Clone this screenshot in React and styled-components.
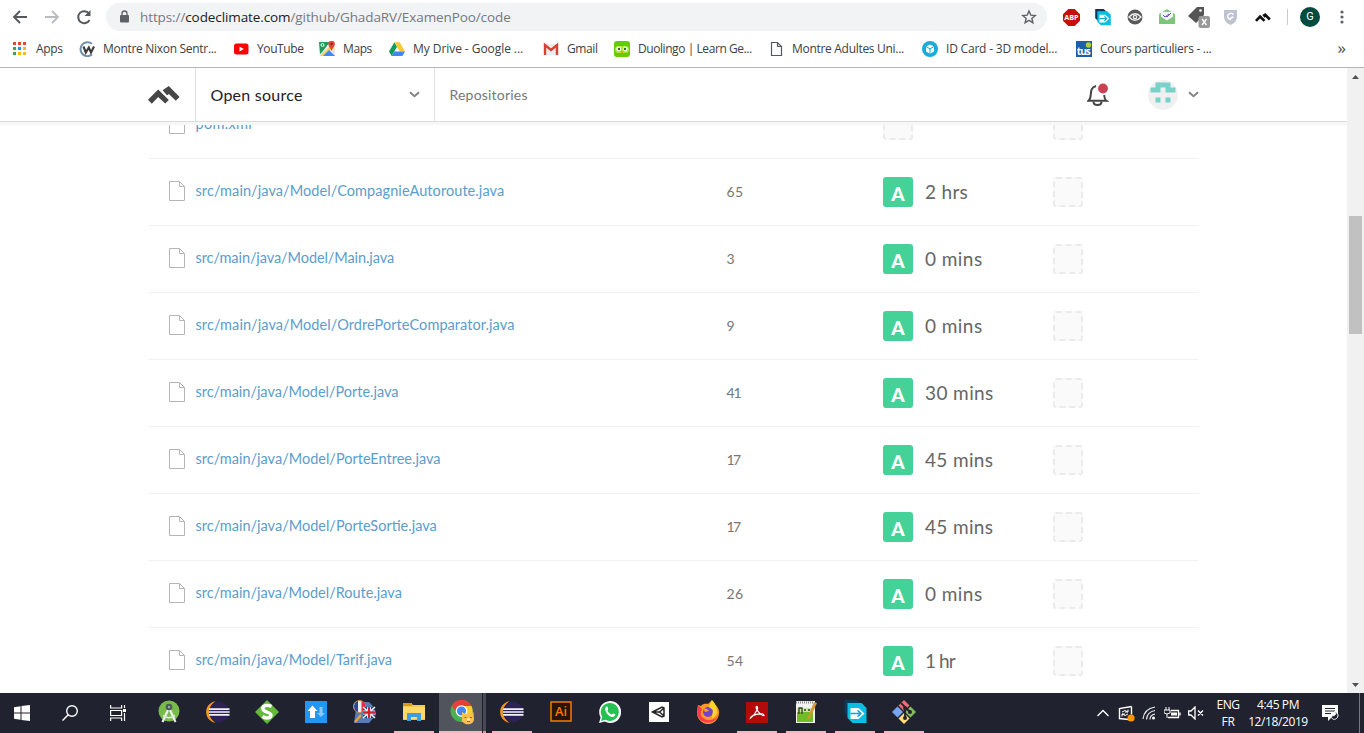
import React from "react";
import styled, { createGlobalStyle } from "styled-components";

const GlobalStyle = createGlobalStyle`
  * { box-sizing: border-box; }
  body { margin: 0; background: #fff; overflow: hidden; }
  svg { display: block; flex: none; }
`;

const ui = `"Open Sans", "Noto Sans", sans-serif`;
const brand = `Lato, "Open Sans", sans-serif`;

const Screen = styled.div`
  width: 1364px; height: 733px; display: flex; flex-direction: column; overflow: hidden;
`;

/* ---------- browser chrome ---------- */
const Chrome = styled.header`
  height: 68px; flex: none; border-bottom: 1px solid #b3b5b7; font-family: ${ui};
`;
const Toolbar = styled.div`
  height: 34px; display: flex; align-items: center; padding-left: 12px;
`;
const NavButtons = styled.div`
  width: 94px; display: flex; gap: 16px;
`;
const AddressBar = styled.div`
  width: 941px; height: 28px; border-radius: 14px; background: #f1f3f4;
  display: flex; align-items: center; padding: 0 9px 0 12px;
`;
const Url = styled.div`
  flex: 1; margin-left: 10px; font-size: 13.5px; line-height: 20px; color: #75797e; white-space: nowrap;
  letter-spacing: -0.1px;
  b { font-weight: 400; color: #202124; }
`;
const Extensions = styled.div`
  display: flex; align-items: center; gap: 8px; margin-left: 12px;
`;
const ExtensionCell = styled.div`
  width: 24px; height: 24px; display: flex; align-items: center; justify-content: center;
`;
const ToolDivider = styled.i`
  width: 1px; height: 16px; background: #c8cacd; margin-left: 12px;
`;
const Profile = styled.div`
  width: 20px; height: 20px; border-radius: 50%; background: #004d40; color: #fff;
  font: 11px/20px Roboto, sans-serif; text-align: center; margin: 0 20px 0 12px;
`;
const Bookmarks = styled.nav`
  height: 33px; display: flex; align-items: center; padding: 0 18px 4px 12px;
`;
const Bookmark = styled.div`
  width: ${p => p.$w}px; flex: none; display: flex; align-items: center; gap: 8px;
`;
const BookmarkText = styled.span`
  font-size: 12px; line-height: 18px; color: #3c4043; white-space: nowrap; letter-spacing: ${p => p.$ls || 0}px;
`;
const More = styled.span`
  margin-left: auto; font-size: 17px; line-height: 16px; padding-bottom: 2px; color: #4a4e52;
`;

/* ---------- page ---------- */
const Body = styled.div`
  height: 625px; display: flex; flex: none;
`;
const Page = styled.main`
  width: 1347px; height: 625px; overflow: hidden; font-family: ${brand};
`;
const SiteHeader = styled.div`
  height: 54px; display: flex; align-items: center; border-bottom: 1px solid #dcdcdc; padding-left: 148px;
`;
const HeaderShade = styled.div`
  height: 3px; background: #f7f7f7;
`;
const LogoCell = styled.div`
  width: 47px;
`;
const Switcher = styled.div`
  width: 240px; height: 53px; border: solid #e0e0e0; border-width: 0 1px; padding: 0 14px 0 14.5px;
  display: flex; align-items: center; justify-content: space-between;
  font-size: 16px; color: #222; letter-spacing: 0.25px;
`;
const Repositories = styled.span`
  width: 652px; padding-left: 14.5px; font-size: 14px; color: #777; letter-spacing: 0.2px; line-height: 20px;
`;
const Account = styled.div`
  display: flex; align-items: center; gap: 10px; margin-left: 39px;
`;
const FileList = styled.div`
  height: 568px; overflow: hidden; padding-left: 148px;
`;
const Scrolled = styled.div`
  margin-top: -33px;
`;
const Row = styled.div`
  width: 1050px; height: 67px; display: grid; grid-template-columns: 47.5px 531px 156.5px 170px 1fr;
  align-items: center; border-bottom: 1px solid #f1f1f1;
`;
const FileCell = styled.div`
  padding: 0 0 3px 20.5px;
`;
const Name = styled.a`
  font-size: 14.5px; line-height: 20px; color: #5b9dcb; padding-bottom: 3px; letter-spacing: ${p => p.$ls}px; white-space: nowrap;
`;
const Lines = styled.span`
  font-size: 14px; line-height: 20px; color: #777; letter-spacing: ${p => p.$ls}px;
`;
const Grade = styled.div`
  display: flex; align-items: center; gap: 12px; height: 30px;
`;
const Badge = styled.b`
  width: 30px; height: 30px; border-radius: 3px; background: #45d298; color: #fff;
  font-size: 19px; line-height: 34px; font-weight: 900; text-align: center;
`;
const Effort = styled.span`
  font-size: 19px; line-height: 30px; color: #666; letter-spacing: ${p => p.$ls}px; white-space: nowrap;
`;
const Blank = styled.i`
  display: block; width: 30px; height: 30px; border: 2px dashed #ebebeb; border-radius: 3px; background: #fafafa;
`;
const Scrollbar = styled.div`
  width: 17px; background: #f1f1f1; display: flex; flex-direction: column; align-items: center;
  padding: 7px 0 6px;
`;
const Thumb = styled.div`
  width: 13px; height: 118px; background: #c1c1c1; margin-top: 137px; margin-bottom: auto;
`;

/* ---------- taskbar ---------- */
const Taskbar = styled.footer`
  height: 40px; flex: none; background: #202230; display: flex; font-family: ${ui}; color: #fff;
`;
const SystemSlot = styled.div`
  width: 48px; display: flex; align-items: center; justify-content: center;
`;
const SystemSlots = styled.div`
  width: 144px; display: flex; margin-left: -2px; margin-right: 2px;
`;
const Slot = styled.div`
  width: 49px; height: 40px; padding: 0 4px 0 5px; display: flex;
`;
const SlotFace = styled.div`
  width: 40px; height: 40px; display: flex; align-items: center; justify-content: center;
  border-bottom: 2px solid ${p => (p.$open ? "#fdb2bf" : "transparent")};
`;
const ActiveSlot = styled(Slot)`
  padding: 0 1px;
  ${SlotFace} { width: 44px; background: #51535d; padding-left: 4px; }
`;
const ActiveEdge = styled.i`
  width: 3px; margin-left: 1px; background: #474954; border-bottom: 2px solid #d997a6;
`;
const Tray = styled.div`
  margin-left: auto; display: flex; align-items: center; width: 268px;
`;
const TrayIcons = styled.div`
  width: 119px; display: flex; align-items: center; gap: 7px;
`;
const TrayText = styled.div`
  width: ${p => p.$w}px; font-size: 12px; line-height: 17px; text-align: center;
  letter-spacing: ${p => p.$ls}px; white-space: nowrap;
`;
const Notice = styled.div`
  margin-left: 7px; flex: 1;
`;
const DesktopEdge = styled.i`
  width: 1px; height: 40px; background: #777985; margin-right: 4px;
`;

/* ---------- icons ---------- */
const Svg = ({ s = 16, w, h, vb, children, ...rest }) => (
  <svg width={w || s} height={h || s} viewBox={vb || `0 0 ${w || s} ${h || s}`} fill="none" {...rest}>{children}</svg>
);
const Chevron = () => <Svg w={11} h={7}><path d="M1 1.200l4.500 4 4.500-4" stroke="#858585" strokeWidth="2" /></Svg>;
const Codeclimate = ({ w, h, c }) => (
  <Svg w={w} h={h} vb="0 0 32 18">
    <path fill={c} d="M0 13.800L10.200 3.400L20.800 14L17.200 17.600L10.200 10.900L3.800 17.700ZM14.600 4.200L20.800 0L31.600 11L27.800 14.800L20.900 8L19 9.300Z" />
  </Svg>
);
const Wave = ({ large }) => (
  <Svg w={large ? 23 : 16} h={large ? 24 : 17} vb="0 0 22 24">
    <path d="M0 0h12l4 4H5v13H4l-4-4z" fill="#0a3a58" />
    <path d="M3 3h14l5 5v15H8l-5-5z" fill="#08bfe3" />
    <path d="M6 8h8l6 5.500-6 5.500H6z" fill="#fff" />
    <path d="M6 13.500h10M13 10.300l3.300 3.200-3.300 3.200" stroke="#08a9cf" strokeWidth="1.600" />
  </Svg>
);
const Eclipse = () => (
  <Svg w={24} h={22}>
    <path d="M9.500 0C-3 3-3 19 9.500 22C2 17 2 5 9.500 0z" fill="#f7941e" />
    <circle cx="13" cy="11" r="10.300" fill="#2c2255" />
    <path d="M3 8.200h20.500M2.700 11h21M3 13.800h20.500" stroke="#f4f3fa" strokeWidth="1.700" />
  </Svg>
);

const appsColors = ["#ea4335", "#ea4335", "#ea4335", "#34a853", "#1a8ff0", "#fbbc04", "#34a853", "#fbbc04", "#fbbc04"];
const bookmarkIcons = {
  apps: <Svg>{appsColors.map((c, i) => <rect key={i} x={1 + (i % 3) * 5} y={1 + Math.floor(i / 3) * 5} width="3" height="3" fill={c} />)}</Svg>,
  nixon: <Svg><path d="M13 2.800A7 7 0 1013 13.500" stroke="#6e8fab" strokeWidth="2" /><path d="M4.500 5.500l2.300 6 3-5 2.200 5 3-6" stroke="#3b3b3b" strokeWidth="2.100" /></Svg>,
  youtube: <Svg><rect x="1" y="2.500" width="14.500" height="11" rx="2.500" fill="#f00" /><path d="M6.500 5.500v5l4.300-2.500z" fill="#fff" /></Svg>,
  maps: <Svg><path d="M0 1h11L1 14z" fill="#1f9d57" /><path d="M0 14L12 3l4 5v7H2z" fill="#e4e6e8" /><path d="M1 15L13 4l3 3-7 3-5 5z" fill="#fcd03b" /><path d="M4 15l6-6 6 6z" fill="#4285f4" /><path d="M12.500 10C11 6 9.300 5.500 9.300 3a3.300 3.300 0 016.600 0c0 2.500-2 3-3.400 7z" fill="#df4938" /><circle cx="12.600" cy="3" r="1.200" fill="#872a24" /><circle cx="3.500" cy="4" r="1.500" stroke="#fff" /></Svg>,
  drive: <Svg><path d="M5.400 1.300L0 10.500l2.700 4.400L8 5.700z" fill="#0f9d58" /><path d="M5.400 1.300h5.300l5.300 9.200h-5.300z" fill="#fbc934" /><path d="M5.300 10.500H16l-2.700 4.400H2.700z" fill="#4285f4" /></Svg>,
  gmail: <Svg><path d="M1 3h14v11H1z" fill="#ededed" /><path d="M2 14V4l6 5 6-5v10" stroke="#d93f32" strokeWidth="2.400" /></Svg>,
  duo: <Svg><rect width="16" height="16" rx="3" fill="#65cc02" /><rect x="1" y="5" width="14" height="7" rx="3.500" fill="#a5e936" /><circle cx="4.700" cy="8" r="2.400" fill="#fff" /><circle cx="11.300" cy="8" r="2.400" fill="#fff" /><circle cx="5" cy="8" r="1.200" fill="#363" /><circle cx="11" cy="8" r="1.200" fill="#363" /><path d="M6 10h4l-2 2.500z" fill="#ff9800" /></Svg>,
  doc: <Svg><path d="M3.500 1.500h6l4 4v9h-10zM9.500 1.500v4h4" stroke="#55585c" strokeWidth="1.200" /></Svg>,
  cube: <Svg><circle cx="8" cy="8" r="8" fill="#1caad9" /><path d="M8 3.400l4 2.200v4.900l-4 2.300-4-2.300V5.600z" fill="#fff" /><path d="M4 5.600l4 2.200 4-2.200M8 7.800v5" stroke="#1caad9" /></Svg>,
  tus: <Svg><path d="M0 0h16v16H0z" fill="#1c5ea8" /><text x="0.800" y="13.500" fontFamily="Open Sans" fontSize="10" fontWeight="700" fill="#fff" textLength="14">tus</text><circle cx="12.500" cy="4" r="2.700" fill="#b6cc39" /></Svg>,
};
const bookmarks = [
  ["apps", "Apps", 67, -0.3], ["nixon", "Montre Nixon Sentr...", 154, -0.3], ["youtube", "YouTube", 86, -0.4],
  ["maps", "Maps", 70, -0.4], ["drive", "My Drive - Google ...", 154, -0.06], ["gmail", "Gmail", 71, -0.4],
  ["duo", "Duolingo | Learn Ge...", 154, -0.43], ["doc", "Montre Adultes Uni...", 154, -0.3],
  ["cube", "ID Card - 3D model...", 154, -0.2], ["tus", "Cours particuliers - ...", 154, -0.28],
];

const FileIcon = () => <Svg w={16} h={20}><path d="M.5.500h10l5 5v14H.5zM10.500.500v5h5" stroke="#b5b5b5" /></Svg>;

const files = [
  { name: "pom.xml", ls: 0.3 },
  { name: "src/main/java/Model/CompagnieAutoroute.java", ls: 0.07, lines: 65, effort: "2 hrs", els: 0.3 },
  { name: "src/main/java/Model/Main.java", ls: -0.08, lines: 3, effort: "0 mins", els: 0.45 },
  { name: "src/main/java/Model/OrdrePorteComparator.java", ls: 0.07, lines: 9, effort: "0 mins", els: 0.45 },
  { name: "src/main/java/Model/Porte.java", ls: -0.02, lines: 41, lls: -1, effort: "30 mins", els: 0.4 },
  { name: "src/main/java/Model/PorteEntree.java", ls: 0, lines: 17, lls: -1.5, effort: "45 mins", els: 0.35 },
  { name: "src/main/java/Model/PorteSortie.java", ls: 0, lines: 17, lls: -1.5, effort: "45 mins", els: 0.35 },
  { name: "src/main/java/Model/Route.java", ls: -0.01, lines: 26, effort: "0 mins", els: 0.45 },
  { name: "src/main/java/Model/Tarif.java", ls: 0, lines: 54, effort: "1 hr", els: -0.9 },
];

const taskIcons = [
  [<Svg w={22} h={24}><circle cx="11" cy="11" r="10.500" fill="#78bb49" /><path d="M4.500 22L10 10M17.500 22L12 10" stroke="#eef1f1" strokeWidth="2.200" /><path d="M5 15.500q6 4.500 12 0" stroke="#dfe8e0" strokeWidth="1.600" /><circle cx="11" cy="7" r="3.300" fill="#4b5b57" /><circle cx="11" cy="7" r="1.200" fill="#9fae9d" /></Svg>],
  [<Eclipse />],
  [<Svg s={24}><path d="M12 0l12 12-12 12L0 12z" fill="#65b83b" /><path d="M16.500 6.500C12 4 7 6 8 9.300S16 12 16 15s-5 4-8.500 1.500" stroke="#fff" strokeWidth="3.400" /></Svg>],
  [<Svg w={22} h={22}><path d="M0 0h22v22H0z" fill="#2196f3" /><path d="M7.500 4.500l5 5.500H10v7H5v-7H2.500z" fill="#fff" /><path d="M14.500 6h3v6h2.500L16 16l-4-4h2.500z" fill="#8dc8f8" /></Svg>],
  [<Svg s={24}><path d="M4 2h12q7 6 7 13l-7 8H1z" fill="#597cb5" /><circle cx="6.500" cy="6.500" r="6" fill="#eee" stroke="#d38b43" /><path d="M2 3q2-2 3-2v11Q1 11 1 6z" fill="#26479b" /><path d="M8.500 1q4 1 4 5.500T8.500 12z" fill="#df3038" /><path d="M10 7h12v11H10z" fill="#253d8c" /><path d="M10 7l12 11M22 7L10 18" stroke="#fff" strokeWidth="1.500" /><path d="M10 12.500h12M16 7v11" stroke="#fff" strokeWidth="4" /><path d="M10 12.500h12M16 7v11" stroke="#d12133" strokeWidth="2.400" /><path d="M2 22l6-7" stroke="#f5a52b" strokeWidth="2" /></Svg>],
  [<Svg w={22} h={20}><path d="M0 1h8l2 2h12v15H0z" fill="#f5c94b" /><path d="M0 1h9v3H0z" fill="#d79a16" /><path d="M0 5h22v12H0z" fill="#ffd968" /><path d="M4 11h14v8h-4v-4H8v4H4z" fill="#3ca0de" /></Svg>, true],
  [<Svg w={25} h={26}><circle cx="11.500" cy="12" r="11" fill="#4caf50" /><path d="M1.800 6.800A11 11 0 0121.500 7h-10L7 14z" fill="#e34133" /><path d="M21.500 7A11 11 0 0111.500 23L16 13 12 7z" fill="#ffcb32" /><circle cx="11.500" cy="12" r="5.200" fill="#4285f4" stroke="#fff" strokeWidth="1.300" /><path d="M12 13l3.500 2h4l4-2 .5 7c0 7-12 7-12 0z" fill="#f9c04c" /><path d="M14.500 18.500h2M20 18.500h2M17 22.500h3" stroke="#a35d23" /><path d="M17 19.500h3v2h-3z" fill="#fff2c8" /></Svg>, true],
  [<Eclipse />, true],
  [<Svg w={22} h={22}><rect x="1" y="1" width="20" height="19" fill="#291400" stroke="#f57b00" strokeWidth="1.500" /><text x="5" y="15" fontFamily="Open Sans" fontSize="12.500" fontWeight="600" fill="#f57b00" textLength="12" lengthAdjust="spacingAndGlyphs">Ai</text></Svg>],
  [<Svg s={22}><path d="M0 22l1.600-5.600A11 11 0 115.800 20.600z" fill="#fff" /><path d="M2 20l1.200-4.200a9 9 0 113.200 3z" fill="#25c052" /><path d="M7.200 5.500c2-.5 1.700 2 1.800 3 0 .8-.8 1-.4 1.700q1.600 2.600 3.900 3.300c.8 0 1-1.300 1.900-1 3 1.200 2 1.500 1.200 2.600-3.600 4-12.300-5.500-8.400-9.600z" fill="#fff" /></Svg>],
  [<Svg w={20} h={20}><path d="M0 0h20v20H0z" fill="#fff" /><path d="M3.500 10L13 5l2 1v8l-2 1zM3.500 10h7M10.500 10L15 6M10.500 10l4.500 4" stroke="#222" strokeWidth="1.500" /></Svg>],
  [<Svg s={24}><path d="M2 5l3 1C8 2 12 5 13 3L16 0c0 3 6 5 7 11 1 17-21 17-22 2z" fill="#ff9b20" /><path d="M2 5l4 4q-4 8 5 11 8 1 11-5c-2 10-18 11-21-1z" fill="#ff3b52" /><circle cx="12" cy="12" r="5" fill="#7344cd" /><path d="M7 8l4 1 2 2-4 1z" fill="#ff9b20" /><path d="M16 0l-3 7 4 3-1 8q4-1 5-6Q21 5 16 0z" fill="#ffd52c" /></Svg>],
  [<Svg w={22} h={21}><rect width="22" height="21" fill="#b30b0b" /><path d="M10.500 4.500c2.500-.5.500 6.500-6 11.500 1-3.500 13.500-6 13.500-2.500-3 1-9.500-8-7.500-9z" stroke="#fff" strokeWidth="1.200" /></Svg>, true],
  [<Svg s={24}><path d="M2 1h19v22H2z" fill="#f1f2ee" /><path d="M3 12h16v10H3z" fill="#71bd28" /><path d="M3 8h16v4H3z" fill="#c8e5a2" /><path d="M2 2.500h18" stroke="#888" strokeDasharray="1 1" strokeWidth="2" /><path d="M5 14V8h3v6M10 10h2M14 10h2" stroke="#303a24" strokeWidth="1.300" /><path d="M14 17L20 2l3 1-7 15-3 2z" fill="#d9952f" /></Svg>, true],
  [<Wave large />, true],
  [<Svg s={24}><path d="M12 0l5.500 5.500L12 11 6.500 5.500z" fill="#ee6d72" /><path d="M18.500 6.500L24 12l-5.500 5.500L13 12z" fill="#83bd59" /><path d="M12 13l5.500 5.500L12 24l-5.500-5.500z" fill="#fddb78" /><path d="M5.500 6.500L11 12l-5.500 5.500L0 12z" fill="#78a5ef" /><path d="M9 3l4 4v11M13 7l5 5" stroke="#24232b" strokeWidth="1.800" /><circle cx="13" cy="8" r="2" fill="#24232b" /><circle cx="18" cy="12" r="2" fill="#24232b" /><circle cx="13" cy="18" r="2" fill="#24232b" /></Svg>, true],
];

const extensionIcons = [
  <Svg s={17} vb="0 0 16 16"><path d="M5 0h6l5 5v6l-5 5H5l-5-5V5z" fill="#c70d0d" /><text x="1.200" y="10.800" fontFamily="Open Sans" fontSize="7" fontWeight="700" fill="#fff" textLength="13.500" lengthAdjust="spacingAndGlyphs">ABP</text></Svg>,
  <Wave />,
  <Svg><circle cx="8" cy="8" r="7.500" fill="#595959" /><path d="M2 8q6-6.500 12 0-6 6.500-12 0z" fill="#595959" stroke="#eee" strokeWidth="1.400" /><circle cx="8" cy="8" r="2.300" fill="#eee" /><circle cx="8" cy="8" r="1" fill="#595959" /></Svg>,
  <Svg><path d="M0 5l8-5 8 5v10H0z" fill="#8acb87" /><path d="M2 3h12v7l-6 3-6-3z" fill="#f3f2fb" /><path d="M4 6l2 2 4-3M7 7l1 1 4-4" stroke="#6955bb" /><path d="M0 6.500l8 5 8-5V15H0z" fill="#7cc57a" /></Svg>,
  <Svg w={22} h={21}><path d="M0 9L9 0h7v8l-8 8z" fill="#555" /><circle cx="12.500" cy="3.500" r="1.300" fill="#fff" /><rect x="10.500" y="9" width="11.500" height="12" rx="2" fill="#999" /><path d="M14 12l4.500 6M18.500 12L14 18" stroke="#fff" strokeWidth="1.300" /></Svg>,
  <Svg><path d="M1 1h13v7q0 5-6.500 8Q1 13 1 8z" fill="#bfc3d1" /><path d="M10.500 5.500A3.200 3.200 0 107 10.500q1-2.500 3.500-2.500" stroke="#fff" strokeWidth="1.500" /></Svg>,
  <Codeclimate w={16} h={9} c="#111" />,
];

export default function App() {
  return (
    <Screen>
      <GlobalStyle />
      <Chrome>
        <Toolbar>
          <NavButtons>
            <Svg><path d="M15 8H2M8 2L2 8l6 6" stroke="#55595e" strokeWidth="1.900" /></Svg>
            <Svg><path d="M1 8h13M8 2l6 6-6 6" stroke="#b9bbbe" strokeWidth="1.800" /></Svg>
            <Svg><path d="M13.500 11A6 6 0 1113 4.500" stroke="#55595e" strokeWidth="2" /><path d="M14.500 1v6h-6z" fill="#55595e" /></Svg>
          </NavButtons>
          <AddressBar>
            <Svg w={12} h={14}><rect x="2" y="5" width="9" height="7.500" rx="1" fill="#5f6368" /><path d="M4 5V3.500a2.500 2.500 0 015 0V5" stroke="#5f6368" strokeWidth="1.300" /></Svg>
            <Url>https://<b>codeclimate.com</b>/github/GhadaRV/ExamenPoo/code</Url>
            <Svg s={18} vb="0 0 24 24"><path d="M12 4l2.400 5.500 5.900.5-4.500 3.900 1.400 5.800-5.200-3.100-5.200 3.100 1.400-5.800L3.700 10l5.900-.5z" stroke="#5f6368" strokeWidth="1.900" /></Svg>
          </AddressBar>
          <Extensions>
            {extensionIcons.map((icon, i) => <ExtensionCell key={i}>{icon}</ExtensionCell>)}
          </Extensions>
          <ToolDivider />
          <Profile>G</Profile>
          <Svg w={4} h={16}><g fill="#5f6368"><circle cx="2" cy="3" r="1.600" /><circle cx="2" cy="8" r="1.600" /><circle cx="2" cy="13" r="1.600" /></g></Svg>
        </Toolbar>
        <Bookmarks>
          {bookmarks.map(([icon, label, w, ls]) => (
            <Bookmark key={label} $w={w}>{bookmarkIcons[icon]}<BookmarkText $ls={ls}>{label}</BookmarkText></Bookmark>
          ))}
          <More>»</More>
        </Bookmarks>
      </Chrome>

      <Body>
        <Page>
          <SiteHeader>
            <LogoCell><Codeclimate w={32} h={18} c="#464646" /></LogoCell>
            <Switcher>Open source<Chevron /></Switcher>
            <Repositories>Repositories</Repositories>
            <Svg w={22} h={24}><path d="M9 3C1 5 6 14 1.500 17.800h18C17 16 17.500 14 17.200 12" stroke="#444" strokeWidth="2" /><path d="M6.500 18.500q0 3.500 4 3.500t4-3.500" stroke="#444" strokeWidth="2" /><circle cx="16" cy="5.500" r="5.800" fill="#fff" /><circle cx="16" cy="5.500" r="4.900" fill="#cb4154" /></Svg>
            <Account>
              <Svg s={30}><circle cx="15" cy="15" r="15" fill="#f0f0f0" /><path d="M7.500 2.500h15v5h5v5h-10v-5h-5v5h-10v-5h5zM7.500 17.500h5v5h-5zM17.500 17.500h5v5h-5z" fill="#79d2ca" /></Svg>
              <Chevron />
            </Account>
          </SiteHeader>
          <HeaderShade />
          <FileList>
            <Scrolled>
              {files.map(({ name, ls, lines, lls = 0.4, effort, els }) => (
                <Row key={name}>
                  <FileCell><FileIcon /></FileCell>
                  <Name $ls={ls}>{name}</Name>
                  <Lines $ls={lls}>{lines}</Lines>
                  <Grade>{effort ? <><Badge>A</Badge><Effort $ls={els}>{effort}</Effort></> : <Blank />}</Grade>
                  <Blank />
                </Row>
              ))}
            </Scrolled>
          </FileList>
        </Page>
        <Scrollbar>
          <Svg w={7} h={4}><path d="M0 4l3.500-4L7 4z" fill="#505050" /></Svg>
          <Thumb />
          <Svg w={7} h={4}><path d="M0 0l3.500 4L7 0z" fill="#505050" /></Svg>
        </Scrollbar>
      </Body>

      <Taskbar>
        <SystemSlots>
          <SystemSlot><Svg><path d="M0 2.300l6.500-1v6.200H0zM7.500 1.100L16 0v7.500H7.500zM0 8.500h6.500v6.200l-6.500-1zM7.500 8.500H16V16l-8.500-1.100z" fill="#fff" /></Svg></SystemSlot>
          <SystemSlot><Svg><circle cx="10" cy="6" r="5.300" stroke="#fff" strokeWidth="1.400" /><path d="M6.200 9.800L.5 15.500" stroke="#fff" strokeWidth="1.500" /></Svg></SystemSlot>
          <SystemSlot><Svg><path d="M.6 0v3h11V0M.6 16v-3h11v3M.6 5.500v5h11v-5zM14.500 0v3M14.500 8v8" stroke="#fff" strokeWidth="1.200" /><path d="M13 4h3v3h-3z" fill="#fff" /></Svg></SystemSlot>
        </SystemSlots>
        {taskIcons.map(([icon, open], i) => {
          const Cell = i === 6 ? ActiveSlot : Slot;
          return <Cell key={i}><SlotFace $open={open}>{icon}</SlotFace>{i === 6 && <ActiveEdge />}</Cell>;
        })}
        <Tray>
          <TrayIcons>
            <Svg w={14} h={8}><path d="M1.500 7L7 1.500 12.500 7" stroke="#fff" strokeWidth="1.300" /></Svg>
            <Svg w={18} h={17}><path d="M14.500 1.500l-12 2v10l9 1M14.500 1.500v8" stroke="#fff" strokeWidth="1.400" /><path d="M5 7q3-3 6 0M11 4.500V7H8M11 9q-3 3-6 0M5 11.500V9h3" stroke="#fff" /><circle cx="14" cy="13" r="3.600" fill="#ff9800" /></Svg>
            <Svg w={15} h={14}><path d="M1 13Q2 3 13 1M4.500 13.500Q5 6 13 4.500M8 13.500Q8 9 13 8" stroke="#eee" strokeWidth="1.200" /><circle cx="11.500" cy="12" r="1.500" fill="#fff" /></Svg>
            <Svg w={17} h={12}><path d="M2 0v3M5 0v3M0 3h6v3q-3 2-6 0zM3 7v4" stroke="#fff" /><path d="M4 10.500h10.500v-7H7M16 5.500v3" stroke="#fff" strokeWidth="1.300" /><path d="M7 5.500h6v3H7z" fill="#fff" /></Svg>
            <Svg w={16} h={14}><path d="M.7 5H3l4-4v12L3 9H.7zM10 4.500l5 5M15 4.500l-5 5" stroke="#fff" strokeWidth="1.300" /></Svg>
          </TrayIcons>
          <TrayText $w={26} $ls={-0.4}>ENG<br />FR</TrayText>
          <TrayText $w={74} $ls={-0.4}>4:45 PM<br />12/18/2019</TrayText>
          <Notice><Svg w={17} h={17}><path d="M0 0h16v12h-6l-4 4v-4H0z" fill="#fff" /><path d="M3 3.500h10M3 6h10M3 8.500h6" stroke="#202230" /><path d="M12 7c3 1 2 4-3 4 1 5 6 4 7 0 .4-3-2-4-4-4z" fill="#202230" stroke="#fff" /></Svg></Notice>
          <DesktopEdge />
        </Tray>
      </Taskbar>
    </Screen>
  );
}
